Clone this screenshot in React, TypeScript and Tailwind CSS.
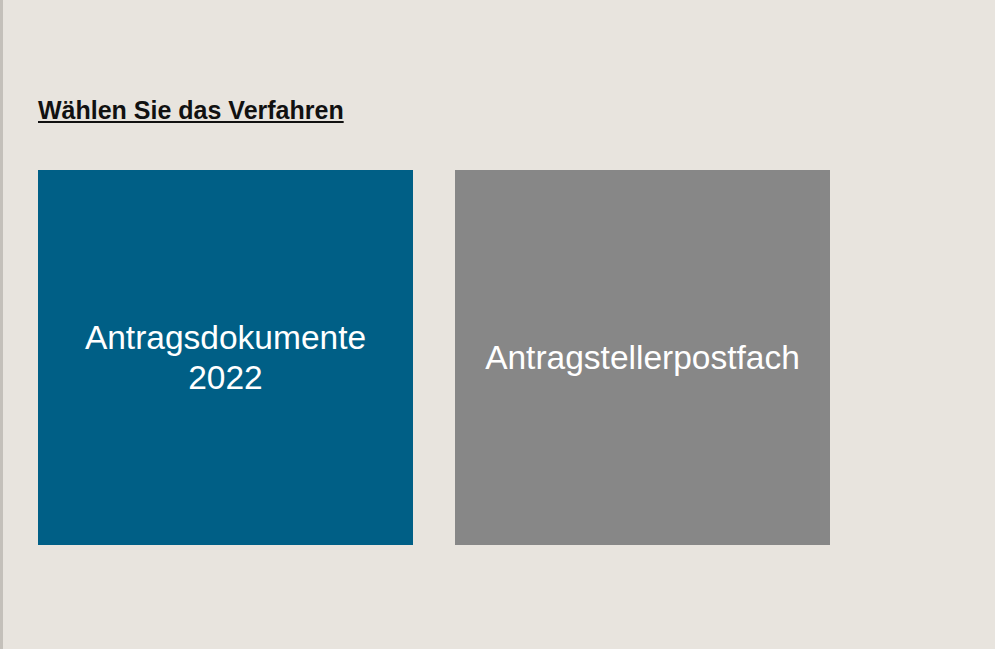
export default function App() {
  return (
    <div
      className="min-h-[649px] w-full bg-[#e8e4de] border-l-[3px] border-[#c4c0ba] pl-[35px] pt-[96px]"
      style={{ fontFamily: '"Liberation Sans", Arial, sans-serif' }}
    >
      <h1 className="text-[25px] leading-[29px] font-bold text-[#111] underline decoration-2 underline-offset-[2px]">
        Wählen Sie das Verfahren
      </h1>
      <div className="mt-[45px] flex gap-[42px]">
        <button className="w-[375px] h-[375px] bg-[#005f86] text-white text-[33.5px] leading-[40px] flex items-center justify-center text-center">
          Antragsdokumente
          <br />
          2022
        </button>
        <button className="w-[375px] h-[375px] bg-[#878787] text-white text-[33.5px] leading-[40px] flex items-center justify-center text-center">
          Antragstellerpostfach
        </button>
      </div>
    </div>
  );
}
